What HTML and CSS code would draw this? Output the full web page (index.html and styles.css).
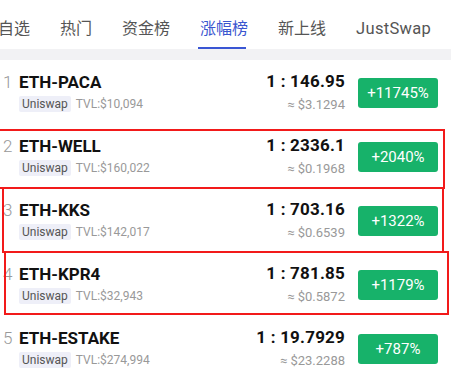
FILE: index.html
```html
<!DOCTYPE html>
<html lang="zh-CN">
<head>
<meta charset="utf-8">
<link rel="stylesheet" href="styles.css">
</head>
<body>
<div class="page">
  <nav class="tabs">
    <div class="tab">自选</div>
    <div class="tab">热门</div>
    <div class="tab">资金榜</div>
    <div class="tab active">涨幅榜</div>
    <div class="tab">新上线</div>
    <div class="tab">JustSwap</div>
  </nav>
  <div class="band"></div>
  <div class="list">
    <div class="row">
      <div class="rank">1</div>
      <div class="info">
        <div class="name">ETH-PACA</div>
        <div class="sub"><span class="tag">Uniswap</span><span class="tvl">TVL:$10,094</span></div>
      </div>
      <div class="price">
        <div class="ratio">1 : 146.95</div>
        <div class="usd">≈ $3.1294</div>
      </div>
      <div class="badge">+11745%</div>
    </div>
    <div class="row">
      <div class="rank">2</div>
      <div class="info">
        <div class="name">ETH-WELL</div>
        <div class="sub"><span class="tag">Uniswap</span><span class="tvl">TVL:$160,022</span></div>
      </div>
      <div class="price">
        <div class="ratio">1 : 2336.1</div>
        <div class="usd">≈ $0.1968</div>
      </div>
      <div class="badge">+2040%</div>
    </div>
    <div class="row">
      <div class="rank">3</div>
      <div class="info">
        <div class="name">ETH-KKS</div>
        <div class="sub"><span class="tag">Uniswap</span><span class="tvl">TVL:$142,017</span></div>
      </div>
      <div class="price">
        <div class="ratio">1 : 703.16</div>
        <div class="usd">≈ $0.6539</div>
      </div>
      <div class="badge">+1322%</div>
    </div>
    <div class="row">
      <div class="rank">4</div>
      <div class="info">
        <div class="name">ETH-KPR4</div>
        <div class="sub"><span class="tag">Uniswap</span><span class="tvl">TVL:$32,943</span></div>
      </div>
      <div class="price">
        <div class="ratio">1 : 781.85</div>
        <div class="usd">≈ $0.5872</div>
      </div>
      <div class="badge">+1179%</div>
    </div>
    <div class="row">
      <div class="rank">5</div>
      <div class="info">
        <div class="name">ETH-ESTAKE</div>
        <div class="sub"><span class="tag">Uniswap</span><span class="tvl">TVL:$274,994</span></div>
      </div>
      <div class="price">
        <div class="ratio">1 : 19.7929</div>
        <div class="usd">≈ $23.2288</div>
      </div>
      <div class="badge">+787%</div>
    </div>
  </div>
  <div class="mark mark-2"></div>
  <div class="mark mark-3"></div>
  <div class="mark mark-4"></div>
</div>
</body>
</html>
```

FILE: styles.css
```css
* { box-sizing: border-box; }
html, body {
  margin: 0;
  padding: 0;
  background: #fff;
}
body {
  font-family: Roboto, "Noto Sans CJK SC", sans-serif;
  width: 451px;
  height: 387px;
  overflow: hidden;
}
.page {
  position: relative;
  width: 451px;
  height: 387px;
  overflow: hidden;
}
.tabs {
  display: flex;
  gap: 30px;
  height: 49px;
  margin-left: -2px;
  align-items: stretch;
  white-space: nowrap;
}
.tab {
  font-size: 16px;
  color: #555;
  line-height: 20px;
  padding-top: 19px;
  position: relative;
}
.tab:last-child {
  font-size: 16.5px;
  letter-spacing: 0.3px;
}
.tab.active {
  color: #3a56cf;
}
.tab.active::after {
  content: "";
  position: absolute;
  left: -2px;
  right: 2px;
  bottom: 0;
  height: 2px;
  background: #3a56d4;
}
.band {
  height: 11px;
  background: #f2f2f4;
}
.row {
  display: flex;
  height: 64px;
  padding-left: 3px;
  padding-right: 13px;
  align-items: flex-start;
}
.rank {
  width: 16px;
  padding-top: 12px;
  font-size: 17px;
  line-height: 20px;
  font-weight: 300;
  color: #999;
}
.info {
  flex: 1;
  padding-top: 12px;
}
.name {
  font-size: 17px;
  font-weight: 700;
  line-height: 20px;
  color: #111;
}
.sub {
  margin-top: 4px;
  display: flex;
  align-items: center;
  height: 16px;
}
.tag {
  background: #eeeff8;
  color: #555;
  font-size: 12px;
  line-height: 16px;
  padding: 0 3px;
  border-radius: 2px;
}
.tvl {
  margin-left: 5px;
  font-size: 12px;
  color: #999;
}
.price {
  text-align: right;
  padding-top: 11px;
}
.ratio {
  font-size: 17px;
  font-weight: 700;
  line-height: 21px;
  color: #111;
  letter-spacing: 0.2px;
}
.usd {
  margin-top: 5px;
  font-size: 13px;
  line-height: 16px;
  color: #999;
}
.badge {
  margin-top: 18px;
  margin-left: 13px;
  width: 80px;
  height: 30px;
  border-radius: 3px;
  background: #17b26a;
  color: #fff;
  font-size: 15px;
  display: flex;
  align-items: center;
  justify-content: center;
}
.mark {
  position: absolute;
  border: 2px solid #f21a1a;
}
.mark-2 { left: -2px; top: 129px; width: 447px; height: 60px; }
.mark-3 { left: 2px; top: 187px; width: 442px; height: 66px; }
.mark-4 { left: 4px; top: 251px; width: 445px; height: 64px; }
```
